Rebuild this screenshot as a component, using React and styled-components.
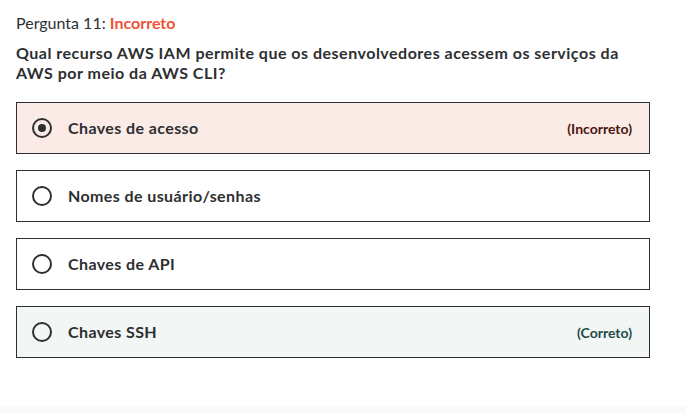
import React from 'react';
import styled, { createGlobalStyle } from 'styled-components';

const Global = createGlobalStyle`
  html, body { margin: 0; padding: 0; background: #fff; }
  body { font-family: Lato, "Noto Sans", sans-serif; color: #2d2f31; }
`;

const Page = styled.div`
  width: 686px;
  height: 413px;
  display: flex;
  flex-direction: column;
  overflow: hidden;
`;

const Content = styled.div`
  flex: 1;
  padding: 11px 36px 0 16px;
`;

const Header = styled.div`
  font-size: 16px;
  line-height: 24px;
  margin-bottom: 8px;
`;

const Status = styled.span`
  color: #ee5336;
  font-weight: 700;
`;

const Question = styled.div`
  font-size: 16px;
  font-weight: 700;
  line-height: 20px;
  letter-spacing: 0.5px;
  margin-bottom: 19px;
`;

const Options = styled.div`
  display: flex;
  flex-direction: column;
  gap: 16px;
`;

const Option = styled.label`
  height: 50px;
  border: 1px solid #2d2f31;
  display: flex;
  align-items: center;
  padding: 0 17px 0 15px;
  background: ${p => p.$state === 'wrong' ? '#fbebe7' : p.$state === 'right' ? '#f2f6f5' : '#fff'};
`;

const Radio = styled.span`
  width: 20px;
  height: 20px;
  box-sizing: border-box;
  border: 2px solid #2d2f31;
  border-radius: 50%;
  display: flex;
  align-items: center;
  justify-content: center;
  margin-right: 16px;
  flex-shrink: 0;
  &::after {
    content: '';
    display: ${p => p.$checked ? 'block' : 'none'};
    width: 8px;
    height: 8px;
    border-radius: 50%;
    background: #2d2f31;
  }
`;

const Label = styled.span`
  flex: 1;
  font-size: 16px;
  font-weight: 700;
  letter-spacing: 0.4px;
  margin-top: -1px;
`;

const Verdict = styled.span`
  font-size: 14px;
  font-weight: 700;
  color: ${p => p.$state === 'wrong' ? '#4a150c' : '#1e4a49'};
`;

const Footer = styled.div`
  height: 7px;
  background: #f7f9fa;
`;

const options = [
  { text: 'Chaves de acesso', checked: true, state: 'wrong', note: '(Incorreto)' },
  { text: 'Nomes de usuário/senhas' },
  { text: 'Chaves de API' },
  { text: 'Chaves SSH', state: 'right', note: '(Correto)' },
];

export default function App() {
  return (
    <Page>
      <Global />
      <Content>
        <Header>Pergunta 11: <Status>Incorreto</Status></Header>
        <Question>
          Qual recurso AWS IAM permite que os desenvolvedores acessem os serviços da AWS por meio da AWS CLI?
        </Question>
        <Options>
          {options.map(o => (
            <Option key={o.text} $state={o.state}>
              <Radio $checked={o.checked} />
              <Label>{o.text}</Label>
              {o.note && <Verdict $state={o.state}>{o.note}</Verdict>}
            </Option>
          ))}
        </Options>
      </Content>
      <Footer />
    </Page>
  );
}
